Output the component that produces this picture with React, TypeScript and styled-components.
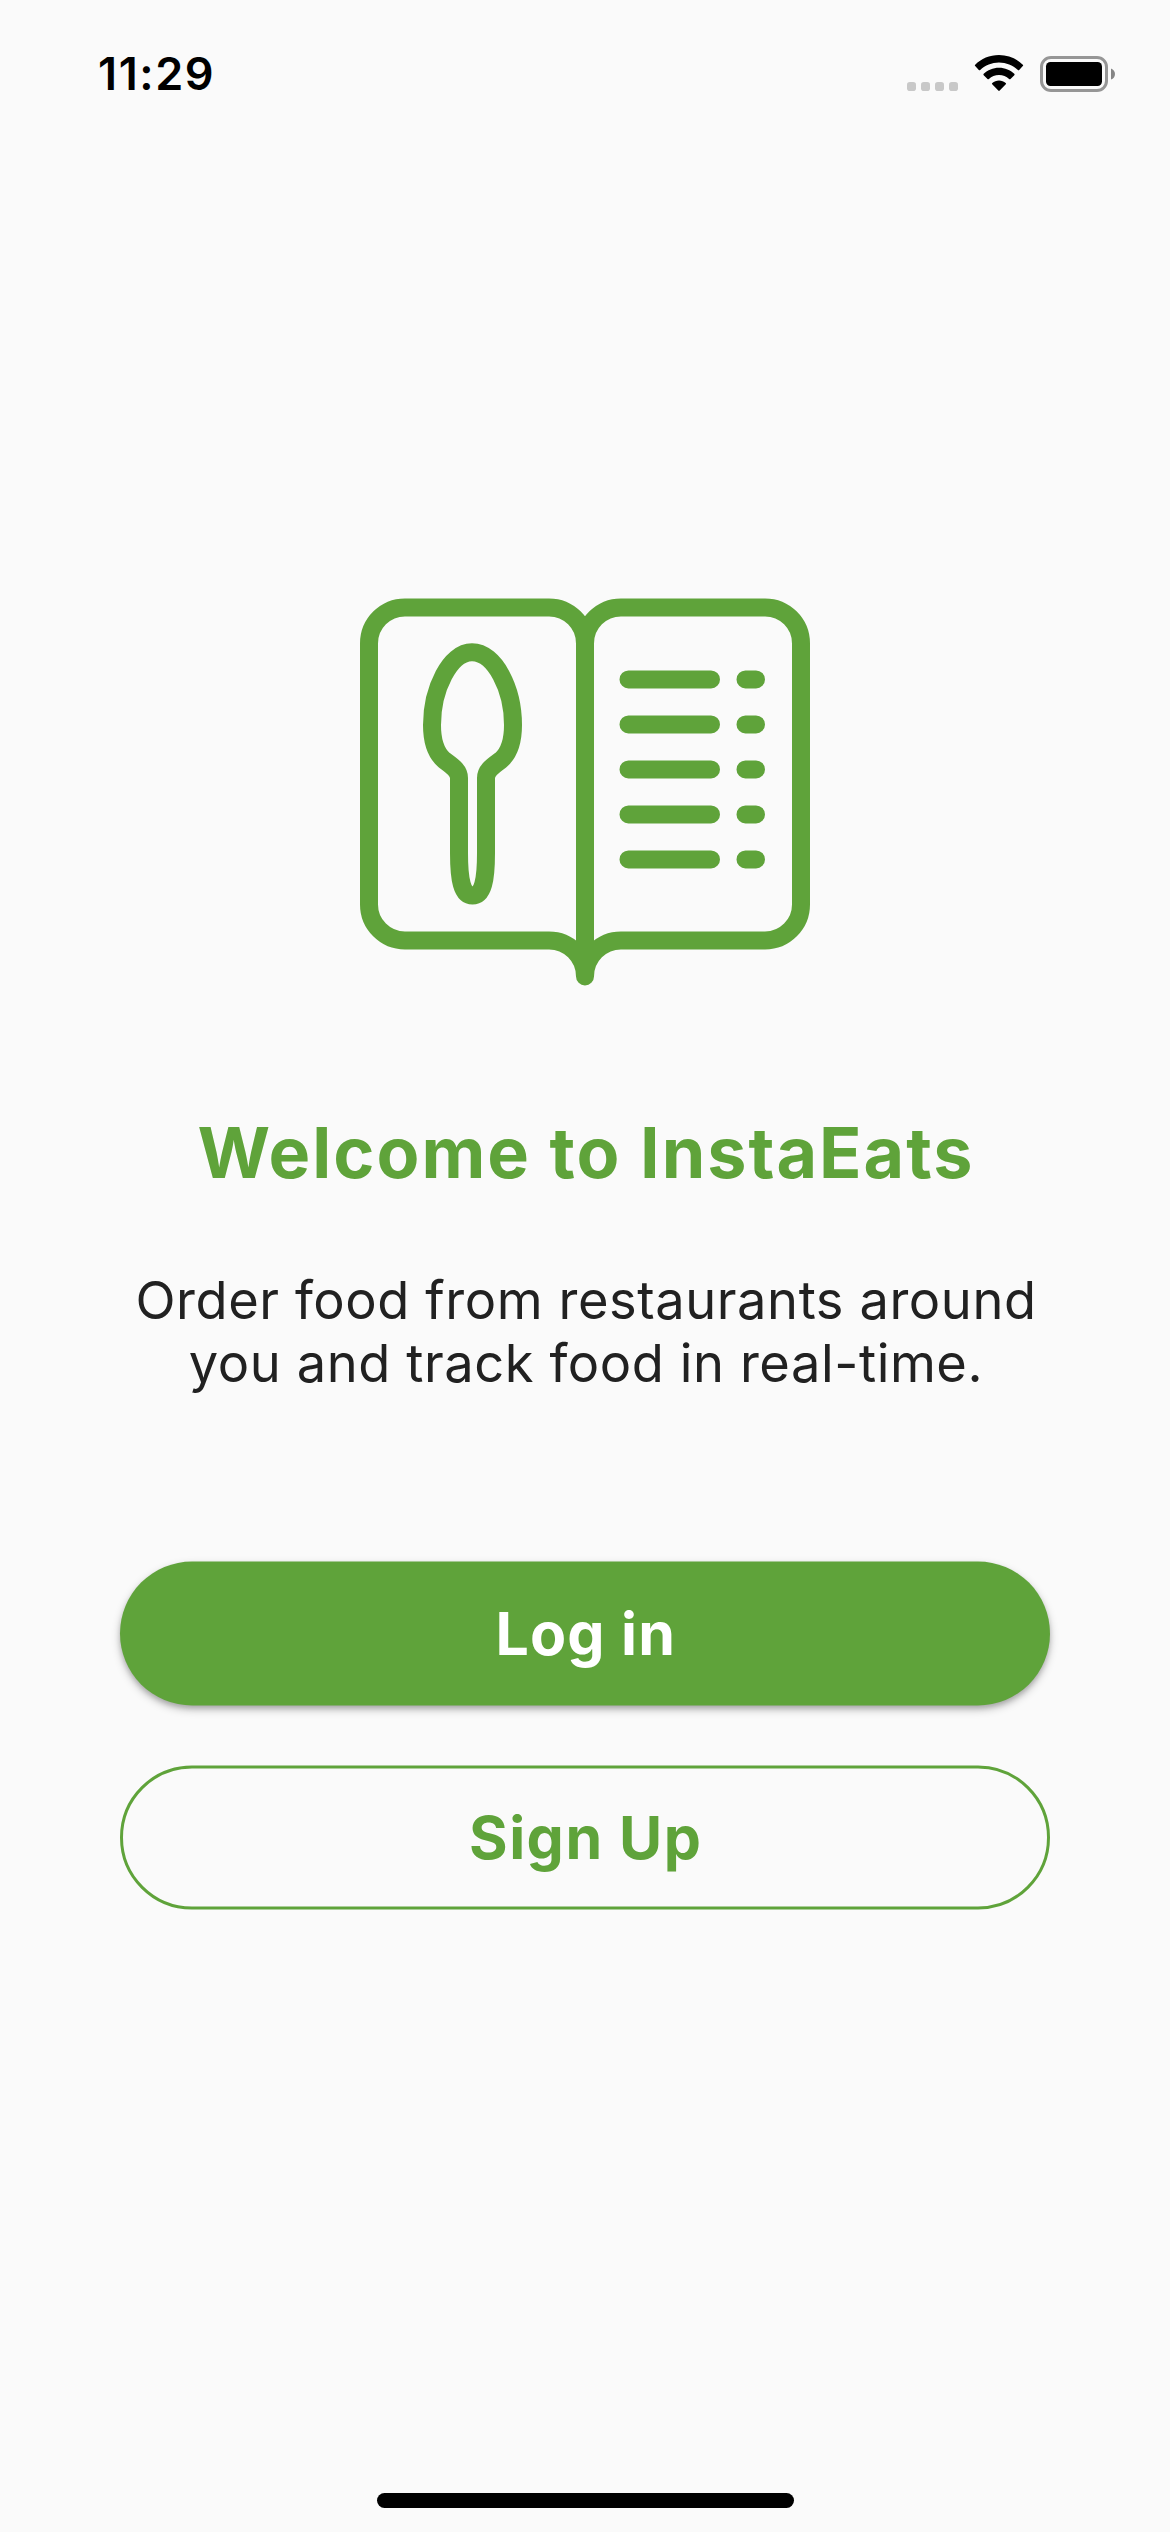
import React from "react";
import styled, { createGlobalStyle } from "styled-components";

const GREEN = "#5fa33a";

const GlobalStyle = createGlobalStyle`
  * { box-sizing: border-box; }
  body { margin: 0; background: #fafafa; }
`;

const Screen = styled.div`
  width: 1170px;
  height: 2532px;
  display: flex;
  flex-direction: column;
  align-items: center;
  overflow: hidden;
  background: #fafafa;
  font-family: Inter, "Liberation Sans", sans-serif;
`;

const StatusBar = styled.header`
  width: 100%;
  height: 141px;
  flex: none;
  display: flex;
  align-items: flex-start;
  justify-content: space-between;
  padding: 47px 53px 0 98px;
`;

const Time = styled.time`
  font-size: 45px;
  line-height: 54px;
  font-weight: 600;
  letter-spacing: 1.6px;
  color: #000;
`;

const StatusIcons = styled.svg`
  display: block;
  width: 212px;
  height: 54px;
`;

const Main = styled.main`
  width: 930px;
  flex: 1;
  display: flex;
  flex-direction: column;
  align-items: center;
  padding-top: 449px;
`;

const MenuBook = styled.svg`
  display: block;
  width: 450px;
  height: 405px;
  flex: none;
`;

const Title = styled.h1`
  margin: 115px 0 0;
  padding-left: 2px;
  font-size: 70px;
  line-height: 86px;
  font-weight: 700;
  letter-spacing: 2px;
  white-space: nowrap;
  color: ${GREEN};
`;

const Description = styled.p`
  margin: 73px 0 0;
  padding-left: 2px;
  font-size: 52.4px;
  line-height: 63px;
  font-weight: 400;
  letter-spacing: 0.58px;
  text-align: center;
  white-space: nowrap;
  color: #212121;
`;

const Actions = styled.div`
  width: 100%;
  display: flex;
  flex-direction: column;
  gap: 60px;
  margin-top: 166px;
  transform: translateY(0.5px);
`;

const Button = styled.button<{ $filled?: boolean }>`
  height: 144px;
  width: 100%;
  padding: 0;
  display: flex;
  align-items: center;
  justify-content: center;
  border: ${(p) => (p.$filled ? "0" : `3px solid ${GREEN}`)};
  border-radius: 72px;
  background: ${(p) => (p.$filled ? GREEN : "transparent")};
  color: ${(p) => (p.$filled ? "#fff" : GREEN)};
  box-shadow: ${(p) =>
    p.$filled ? "0 4px 9px rgba(0,0,0,.26), 0 3px 4px rgba(0,0,0,.12)" : "none"};
  font-family: inherit;
  font-size: 59px;
  line-height: 72px;
  font-weight: 700;
  letter-spacing: ${(p) => (p.$filled ? "1.2px" : "1.5px")};
  text-indent: 1.5px;
`;

const HomeIndicator = styled.div`
  width: 417px;
  height: 15px;
  flex: none;
  margin-bottom: 24px;
  border-radius: 8px;
  background: #000;
`;

const rows = [679.4, 724.4, 769.4, 814.4, 859.4];
const dots = [907, 921, 935, 949];

export default function App() {
  return (
    <>
      <GlobalStyle />
      <Screen>
        <StatusBar>
          <Time>11:29</Time>
          <StatusIcons viewBox="905 47 212 54">
            {dots.map((x) => (
              <rect key={x} x={x} y="82" width="9" height="9" rx="2.8" fill="#c8c8c8" />
            ))}
            <path d="M999 55C1008.4 55 1016.8 58.7 1022.8 64.7Q1023.5 65.4 1022.8 66.1L1019.2 69.9Q1018.5 70.5 1017.8 69.9C1012.8 65.2 1006.2 62.4 999 62.4S985.2 65.2 980.2 69.9Q979.5 70.5 978.8 69.9L975.2 66.1Q974.5 65.4 975.2 64.7C981.2 58.7 989.6 55 999 55Z" />
            <path d="M999 67.7C1005 67.7 1010.4 70 1014.3 73.8Q1015 74.5 1014.3 75.2L1010.5 79Q1009.8 79.6 1009.1 79C1006.4 76.5 1002.9 75.1 999 75.1S991.6 76.5 988.9 79Q988.2 79.6 987.5 79L983.7 75.2Q983 74.5 983.7 73.8C987.6 70 993 67.7 999 67.7Z" />
            <path d="M999 80.4C1001.5 80.4 1003.9 81.3 1005.7 82.9Q1006.5 83.6 1005.8 84.3L999.7 90.6Q999 91.2 998.3 90.6L992.2 84.3Q991.5 83.6 992.3 82.9C994.1 81.3 996.5 80.4 999 80.4Z" />
            <rect x="1041.5" y="57.5" width="65" height="33" rx="9.5" fill="none" stroke="#969696" strokeWidth="3" />
            <rect x="1046" y="62" width="56" height="24" rx="4.5" />
            <path d="M1111 68.4C1113.5 69.3 1115 71.5 1115 74S1113.5 78.7 1111 79.6Z" fill="#858585" />
          </StatusIcons>
        </StatusBar>
        <Main>
          <MenuBook
            viewBox="360 590 450 405"
            fill="none"
            stroke={GREEN}
            strokeWidth="18"
            strokeLinecap="round"
          >
            <path d="M585 976.4V643.4A36 36 0 0 0 549 607.4H405A36 36 0 0 0 369 643.4V904.4A36 36 0 0 0 405 940.4H549A36 36 0 0 1 585 976.4A36 36 0 0 1 621 940.4H765A36 36 0 0 0 801 904.4V643.4A36 36 0 0 0 765 607.4H621A36 36 0 0 0 585 643.4" />
            <path d="M459 853V778C459 770 452 766 444 760C436 753 432 743 432 725C432 689 450 652.3 472 652.3C495 652.3 513 689 513 725C513 743 509 753 501 760C493 766 486 770 486 778V853C486 880 483 895.5 472.5 895.5S459 880 459 853Z" />
            {rows.map((y) => (
              <path key={y} d={`M628.5 ${y}H711M745.5 ${y}H756`} />
            ))}
          </MenuBook>
          <Title>Welcome to InstaEats</Title>
          <Description>
            Order food from restaurants around
            <br />
            you and track food in real-time.
          </Description>
          <Actions>
            <Button $filled>Log in</Button>
            <Button>Sign Up</Button>
          </Actions>
        </Main>
        <HomeIndicator />
      </Screen>
    </>
  );
}
